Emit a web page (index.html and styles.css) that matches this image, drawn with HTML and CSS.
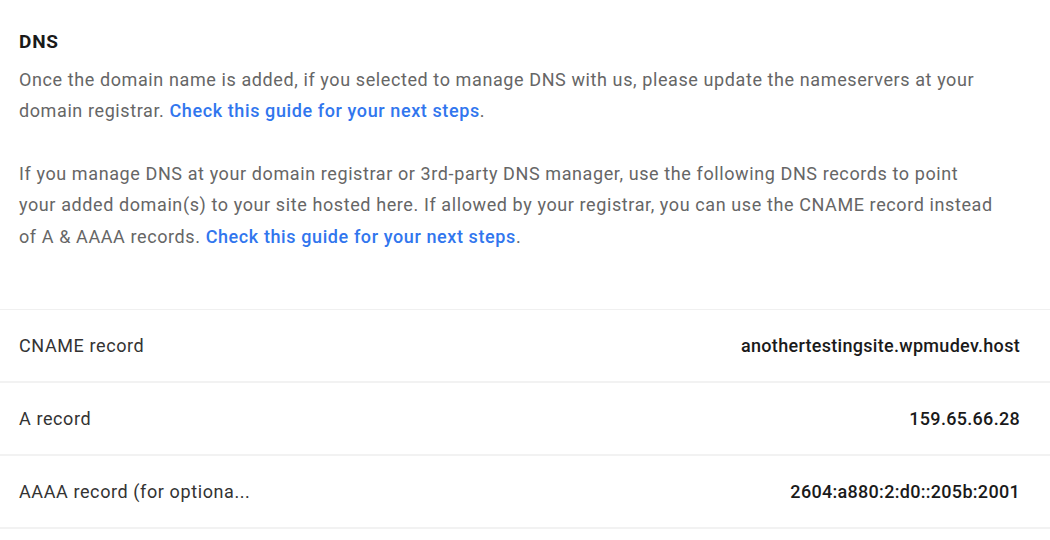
FILE: index.html
```html
<!DOCTYPE html>
<html>
<head>
<meta charset="utf-8">
<link rel="stylesheet" href="styles.css">
</head>
<body>
<div class="panel">
  <div class="intro">
    <h2 class="title">DNS</h2>
    <p class="text">Once the domain name is added, if you selected to manage DNS with us, please update the nameservers at your domain registrar. <a class="link" href="#">Check this guide for your next steps</a>.</p>
    <p class="text">If you manage DNS at your domain registrar or 3rd-party DNS manager, use the following DNS records to point your added domain(s) to your site hosted here. If allowed by your registrar, you can use the CNAME record instead of A &amp; AAAA records. <a class="link" href="#">Check this guide for your next steps</a>.</p>
  </div>
  <div class="records">
    <div class="row"><span class="label">CNAME record</span><span class="value">anothertestingsite.wpmudev.host</span></div>
    <div class="row"><span class="label">A record</span><span class="value">159.65.66.28</span></div>
    <div class="row"><span class="label">AAAA record (for optiona...</span><span class="value">2604:a880:2:d0::205b:2001</span></div>
  </div>
</div>
</body>
</html>
```
FILE: styles.css
```css
html, body {
  margin: 0;
  padding: 0;
  background: #fff;
}
body {
  font-family: Roboto, "Liberation Sans", sans-serif;
  -webkit-font-smoothing: antialiased;
}
.panel {
  width: 1050px;
}
.intro {
  padding: 29px 55px 57px 19px;
}
.title {
  margin: 0 0 9px;
  font-size: 19px;
  font-weight: 700;
  line-height: 26px;
  letter-spacing: 0.8px;
  color: #1a1a1a;
}
.text {
  margin: 0 0 31px;
  font-size: 18px;
  line-height: 31.4px;
  letter-spacing: 0.6px;
  color: #666;
}
.text:last-child {
  margin-bottom: 0;
}
.link {
  color: #3176ee;
  text-decoration: none;
  font-weight: 500;
}
.records {
  border-top: 1px solid #f0f0f0;
}
.row {
  display: flex;
  justify-content: space-between;
  align-items: center;
  height: 71px;
  padding: 0 30px 0 19px;
  border-bottom: 2px solid #f2f2f2;
  font-size: 18px;
}
.label {
  color: #333;
  letter-spacing: 0.6px;
}
.value {
  color: #1a1a1a;
  font-weight: 500;
  letter-spacing: 0.3px;
}
```
